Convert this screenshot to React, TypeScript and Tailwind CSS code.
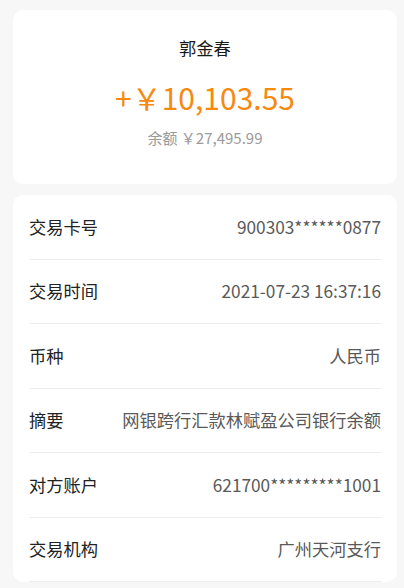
import React from "react";

const rows: [string, string][] = [
  ["交易卡号", "900303******0877"],
  ["交易时间", "2021-07-23 16:37:16"],
  ["币种", "人民币"],
  ["摘要", "网银跨行汇款林赋盈公司银行余额"],
  ["对方账户", "621700*********1001"],
  ["交易机构", "广州天河支行"],
];

export default function App() {
  return (
    <div
      className="w-[404px] h-[588px] overflow-hidden bg-[#f7f7f7] pt-[10px] pl-[13px]"
      style={{ fontFamily: '"Noto Sans CJK SC", "Noto Sans", sans-serif' }}
    >
      <div className="w-[384px] h-[174px] rounded-[10px] bg-white flex flex-col items-center pt-[26px]">
        <div className="text-[17.25px] leading-[24px] text-[#1a1a1a]">郭金春</div>
        <div className="mt-[17px] text-[30px] leading-[40px] text-[#f7890f]">+￥10,103.55</div>
        <div className="mt-[11px] text-[15px] leading-[20px] text-[#9a9a9a]">余额 ￥27,495.99</div>
      </div>
      <div className="w-[384px] mt-[11px] rounded-[10px] bg-white px-4">
        {rows.map(([k, v]) => (
          <div
            key={k}
            className="h-[64.5px] border-b border-[#ededed] flex items-center justify-between text-[17.25px] leading-[24px]"
          >
            <span className="text-[#222222]">{k}</span>
            <span className="text-[#595959]">{v}</span>
          </div>
        ))}
      </div>
    </div>
  );
}
